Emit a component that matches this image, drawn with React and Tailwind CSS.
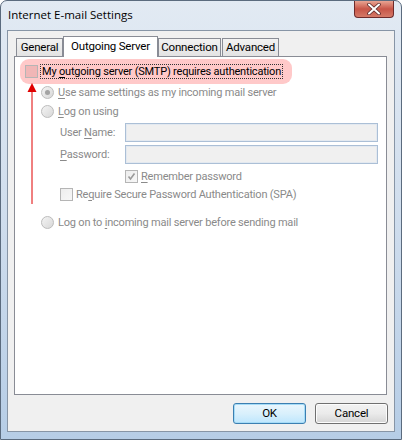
import React from 'react';

const font = { fontFamily: 'Roboto, "Liberation Sans", sans-serif' };

const Radio = ({ checked }) => (
  <span className="relative w-[13px] h-[13px] rounded-full border border-[#bcbcbc] bg-gradient-to-br from-[#f4f4f4] to-[#d8d8d8] flex items-center justify-center shrink-0">
    {checked && <span className="w-[5px] h-[5px] rounded-full bg-[#a3a3a3] shadow-[0_0_1px_#ddd]" />}
  </span>
);

const Check = ({ checked, tint }) => (
  <span
    className={`w-[13px] h-[13px] border border-[#b5b5b5] flex items-center justify-center shrink-0 ${
      tint ? 'bg-[#f0b6b6]' : 'bg-gradient-to-br from-[#ededed] to-[#f7f7f7]'
    }`}
  >
    {checked && (
      <svg width="9" height="9" viewBox="0 0 9 9">
        <path d="M1.5 4.5 L3.5 7 L7.5 1.5" fill="none" stroke="#9a9a9a" strokeWidth="1.6" />
      </svg>
    )}
  </span>
);

const Tab = ({ label, active, w }) =>
  active ? (
    <div className={`${w} h-[21px] -mb-px flex justify-center pt-[4px] bg-white border border-b-0 border-[#898c95] relative z-10 text-black`}>
      {label}
    </div>
  ) : (
    <div className={`${w} h-[18px] mt-[2px] flex items-center justify-center bg-gradient-to-b from-[#f2f2f2] to-[#e3e3e3] border border-b-0 border-[#898c95] text-black`}>
      {label}
    </div>
  );

const U = ({ children }) => <span className="underline underline-offset-2">{children}</span>;

export default function App() {
  return (
    <div className="w-[402px] h-[440px] text-[11px] tracking-[-0.2px] leading-none" style={font}>
      <div className="w-full h-full flex flex-col rounded-t-[7px] border border-[#5b6b7e] bg-gradient-to-b from-[#e2eaf3] via-[#cfdded] to-[#b6cde6]">
        {/* title bar */}
        <div className="h-[29px] flex items-start relative">
          <div className="pl-[7px] pt-[8px] text-[#000] text-[11.5px] tracking-normal" style={{ fontFamily: '"Open Sans", sans-serif' }}>
            Internet E-mail Settings
          </div>
          <div className="ml-auto mr-[7px] w-[40px] h-[17px] rounded-b-[4px] border border-t-0 border-[#6d2b2b] bg-gradient-to-b from-[#e8a493] via-[#c75548] to-[#d47a68] flex items-center justify-center">
            <svg width="14" height="12" viewBox="0 0 14 12">
              <path d="M2 1.5 L12 10.5 M12 1.5 L2 10.5" stroke="#5a2a2a" strokeWidth="3.6" strokeLinecap="round" />
              <path d="M2 1.5 L12 10.5 M12 1.5 L2 10.5" stroke="#ffffff" strokeWidth="2" strokeLinecap="round" />
            </svg>
          </div>
        </div>

        {/* client area */}
        <div className="mx-[6px] flex-1 border border-[#8795a6] bg-[#f0f0f0] flex flex-col pl-[6px] pt-[5px]">
          <div className="flex items-start pl-[2px] h-[20px] text-[11.5px]">
            <Tab label="General" w="w-[47px]" />
            <Tab label="Outgoing Server" w="w-[95px]" active />
            <Tab label="Connection" w="w-[63px]" />
            <div className="w-[1px]" />
            <Tab label="Advanced" w="w-[57px]" />
          </div>

          <div className="w-[373px] h-[339px] border border-[#898c95] bg-white relative flex flex-col text-[#8a8a8a]">
            <div className="mt-[2px] ml-[5px] w-[272px] h-[25px] rounded-[9px] bg-[#ffc9c9] flex items-center pl-[5px] shrink-0">
              <Check tint />
              <span className="ml-[2px] px-[1px] py-[1px] border border-dotted border-[#333] text-black whitespace-nowrap">
                My <U>o</U>utgoing server (SMTP) requires authentication
              </span>
            </div>

            <div className="-mt-px h-[18px] ml-[26px] flex items-center gap-[4px]">
              <Radio checked />
              <span><U>U</U>se same settings as my incoming mail server</span>
            </div>
            <div className="mt-px h-[18px] ml-[26px] flex items-center gap-[4px]">
              <Radio />
              <span><U>L</U>og on using</span>
            </div>

            <div className="mt-[3px] h-[19px] ml-[45px] flex items-center">
              <span className="w-[65px] whitespace-nowrap">User <U>N</U>ame:</span>
              <div className="w-[253px] h-[19px] border border-[#abbfd6] bg-[#f0f0f0] shadow-[inset_0_0_0_1px_#e3e9f0]" />
            </div>
            <div className="mt-[3px] h-[19px] ml-[45px] flex items-center">
              <span className="w-[65px]"><U>P</U>assword:</span>
              <div className="w-[253px] h-[19px] border border-[#abbfd6] bg-[#f0f0f0] shadow-[inset_0_0_0_1px_#e3e9f0]" />
            </div>

            <div className="mt-[3px] h-[18px] ml-[110px] flex items-center gap-[3px]">
              <Check checked />
              <span><U>R</U>emember password</span>
            </div>
            <div className="h-[18px] ml-[45px] flex items-center gap-[3px]">
              <Check />
              <span>Re<U>q</U>uire Secure Password Authentication (SPA)</span>
            </div>

            <div className="mt-[10px] h-[18px] ml-[26px] flex items-center gap-[4px]">
              <Radio />
              <span>Log on to <U>i</U>ncoming mail server before sending mail</span>
            </div>

            {/* annotation arrow */}
            <svg className="absolute left-[12px] top-[26px]" width="10" height="122" viewBox="0 0 10 122">
              <path d="M5 0 L9.5 9 L0.5 9 Z" fill="#e00000" />
              <path d="M5 8 L5 121" stroke="#e00000" strokeWidth="1" />
            </svg>
          </div>

          <div className="flex justify-end gap-[9px] pr-[6px] mt-[8px] text-[11.5px]">
            <button className="w-[73px] h-[21px] rounded-[3px] border border-[#3c7fb1] bg-gradient-to-b from-[#eaf6fd] via-[#d9f0fc] to-[#bee6fd] shadow-[inset_0_0_0_1px_#a6dcf7] text-black">
              OK
            </button>
            <button className="w-[73px] h-[21px] rounded-[3px] border border-[#707070] bg-gradient-to-b from-[#f2f2f2] via-[#ebebeb] to-[#d5d5d5] shadow-[inset_0_0_0_1px_#fcfcfc] text-black">
              Cancel
            </button>
          </div>
        </div>
        <div className="h-[7px]" />
      </div>
    </div>
  );
}
